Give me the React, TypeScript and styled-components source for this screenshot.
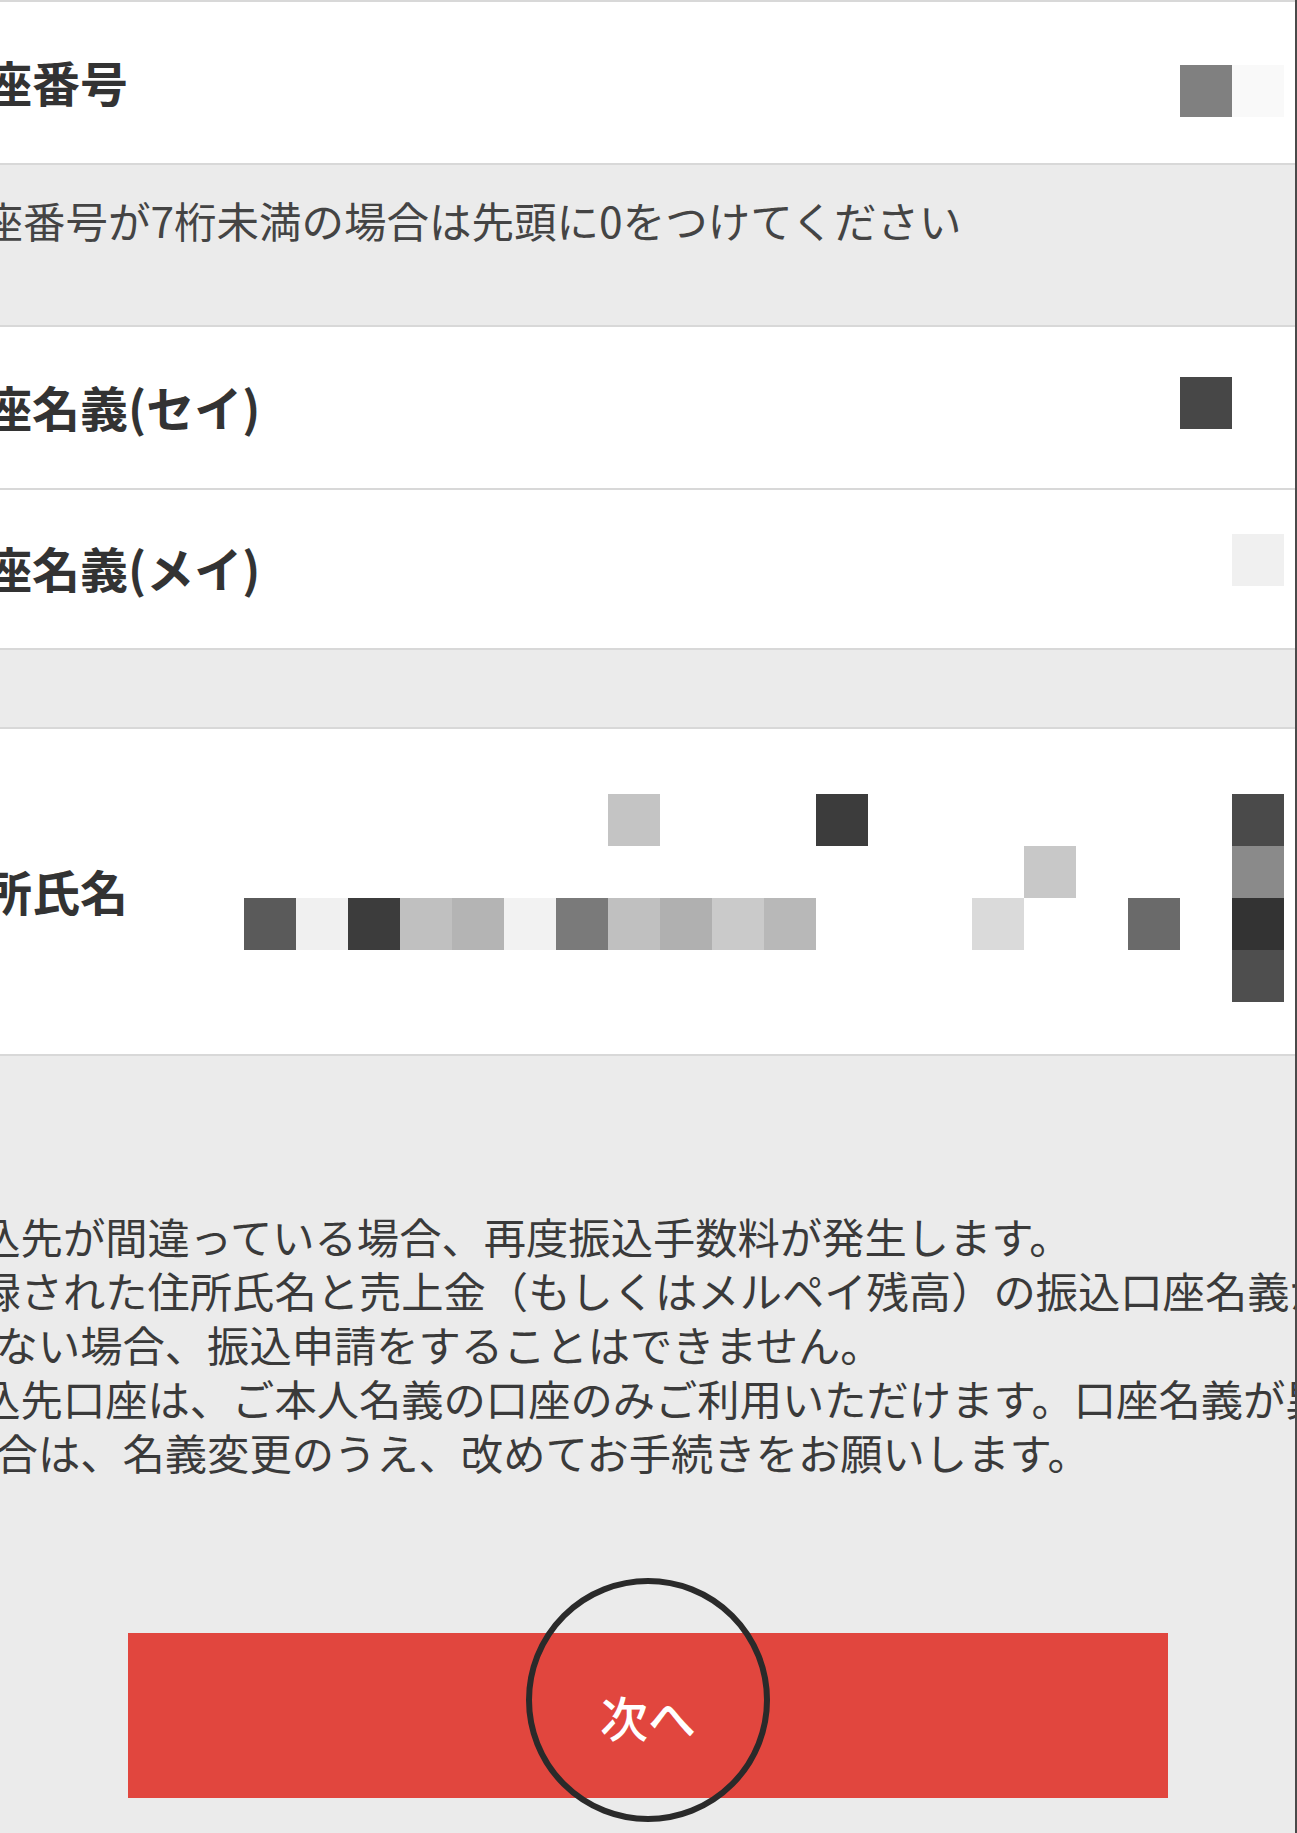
import React from "react";
import styled, { createGlobalStyle } from "styled-components";

const GlobalStyle = createGlobalStyle`
    html, body {
        margin: 0;
        padding: 0;
        background: #ebebeb;
    }
`;

// mosaic cells are 52px squares on one grid over the whole page
const CELL = 52;

type Cell = [number, number, string];

const Page = styled.div`
    position: relative;
    width: 1297px;
    min-height: 1833px;
    box-sizing: border-box;
    overflow: hidden;
    background: #ebebeb;
    border-right: 2px solid #4a4a4a;
    font-family: "Noto Sans CJK JP", "Noto Sans", sans-serif;
    color: #333;
`;

const Card = styled.section<{ gap?: number }>`
    background: #fff;
    border-top: 2px solid #d8d8d8;
    border-bottom: 2px solid #d8d8d8;
    margin-top: ${p => p.gap || 0}px;
`;

const Row = styled.div<{ h: number }>`
    position: relative;
    display: flex;
    align-items: center;
    height: ${p => p.h}px;
    padding-bottom: 4px;
    box-sizing: border-box;

    & + & {
        border-top: 2px solid #d8d8d8;
    }
`;

const Label = styled.div`
    margin-left: -64px;
    font-size: 48px;
    font-weight: 700;
    color: #333;
    white-space: nowrap;
`;

const Hint = styled.p`
    margin: 0 0 0 -62px;
    height: 160px;
    box-sizing: border-box;
    padding-top: 23px;
    font-size: 42.5px;
    line-height: 63px;
    color: #444;
    white-space: nowrap;
`;

// pixelated (censored) value, laid over the row
const Mosaic = styled.div<{ x: number; y: number }>`
    position: absolute;
    left: ${p => p.x}px;
    top: ${p => p.y}px;
    display: grid;
    grid-template-columns: repeat(20, ${CELL}px);
    grid-auto-rows: ${CELL}px;
    pointer-events: none;
`;

const Block = styled.span`
    display: block;
    width: ${CELL}px;
    height: ${CELL}px;
`;

/* first line of each note sits a little right of its wrapped lines */
const Notes = styled.ul`
    list-style: none;
    margin: 153px 0 0 -89px;
    padding: 0;
    width: calc(34em + 27px);
    font-size: 42.3px;
    line-height: 54px;
    color: #3a3a3a;
`;

const Note = styled.li`
    margin: 0;
    text-indent: 25px;
`;

const ButtonArea = styled.div`
    position: relative;
    margin: 154px 0 0 128px;
    width: 1040px;
`;

const NextButton = styled.button`
    display: flex;
    align-items: center;
    justify-content: center;
    width: 100%;
    height: 165px;
    border: none;
    background: #e1463e;
    color: #fff;
    font-family: inherit;
    font-size: 48px;
    font-weight: 500;
    padding: 0;
`;

// hand-drawn annotation ring round the button label
const Ring = styled.div`
    position: absolute;
    left: 50%;
    top: -55px;
    width: 244px;
    height: 244px;
    box-sizing: border-box;
    transform: translateX(-50%);
    border: 6px solid #2a2a2a;
    border-radius: 50%;
    pointer-events: none;
`;

const MosaicCells = ({ x, y, cells }: { x: number; y: number; cells: Cell[] }) => (
    <Mosaic x={x} y={y}>
        {cells.map(([col, row, color], i) => (
            <Block
                key={i}
                style={{ gridColumn: col + 1, gridRow: row + 1, background: color }}
            />
        ))}
    </Mosaic>
);

const nameCells: Cell[] = [
    [7, 0, "#c4c4c4"],
    [11, 0, "#3c3c3c"],
    [19, 0, "#4a4a4a"],
    [15, 1, "#c8c8c8"],
    [19, 1, "#8a8a8a"],
    [0, 2, "#5a5a5a"],
    [1, 2, "#f0f0f0"],
    [2, 2, "#3c3c3c"],
    [3, 2, "#c0c0c0"],
    [4, 2, "#b4b4b4"],
    [5, 2, "#f2f2f2"],
    [6, 2, "#7a7a7a"],
    [7, 2, "#c0c0c0"],
    [8, 2, "#b0b0b0"],
    [9, 2, "#cacaca"],
    [10, 2, "#b8b8b8"],
    [14, 2, "#dadada"],
    [17, 2, "#6a6a6a"],
    [19, 2, "#333333"],
    [19, 3, "#4e4e4e"],
];

const notes = [
    "振込先が間違っている場合、再度振込手数料が発生します。",
    "登録された住所氏名と売上金（もしくはメルペイ残高）の振込口座名義が一致しない場合、振込申請をすることはできません。",
    "振込先口座は、ご本人名義の口座のみご利用いただけます。口座名義が異なる場合は、名義変更のうえ、改めてお手続きをお願いします。",
];

const App = (): React.ReactElement => (
    <Page>
        <GlobalStyle />

        <Card>
            <Row h={161}>
                <Label>口座番号</Label>
                <MosaicCells
                    x={1180}
                    y={63}
                    cells={[
                        [0, 0, "#808080"],
                        [1, 0, "#f9f9f9"],
                    ]}
                />
            </Row>
        </Card>

        <Hint>口座番号が7桁未満の場合は先頭に0をつけてください</Hint>

        <Card>
            <Row h={161}>
                <Label>口座名義(セイ)</Label>
                <MosaicCells x={1180} y={50} cells={[[0, 0, "#474747"]]} />
            </Row>
            <Row h={160}>
                <Label>口座名義(メイ)</Label>
                <MosaicCells x={1232} y={44} cells={[[0, 0, "#f0f0f0"]]} />
            </Row>
        </Card>

        <Card gap={77}>
            <Row h={325}>
                <Label>住所氏名</Label>
                <MosaicCells x={244} y={65} cells={nameCells} />
            </Row>
        </Card>

        <Notes>
            {notes.map(text => (
                <Note key={text}>{text}</Note>
            ))}
        </Notes>

        <ButtonArea>
            <NextButton type="button">次へ</NextButton>
            <Ring />
        </ButtonArea>
    </Page>
);

export default App;
